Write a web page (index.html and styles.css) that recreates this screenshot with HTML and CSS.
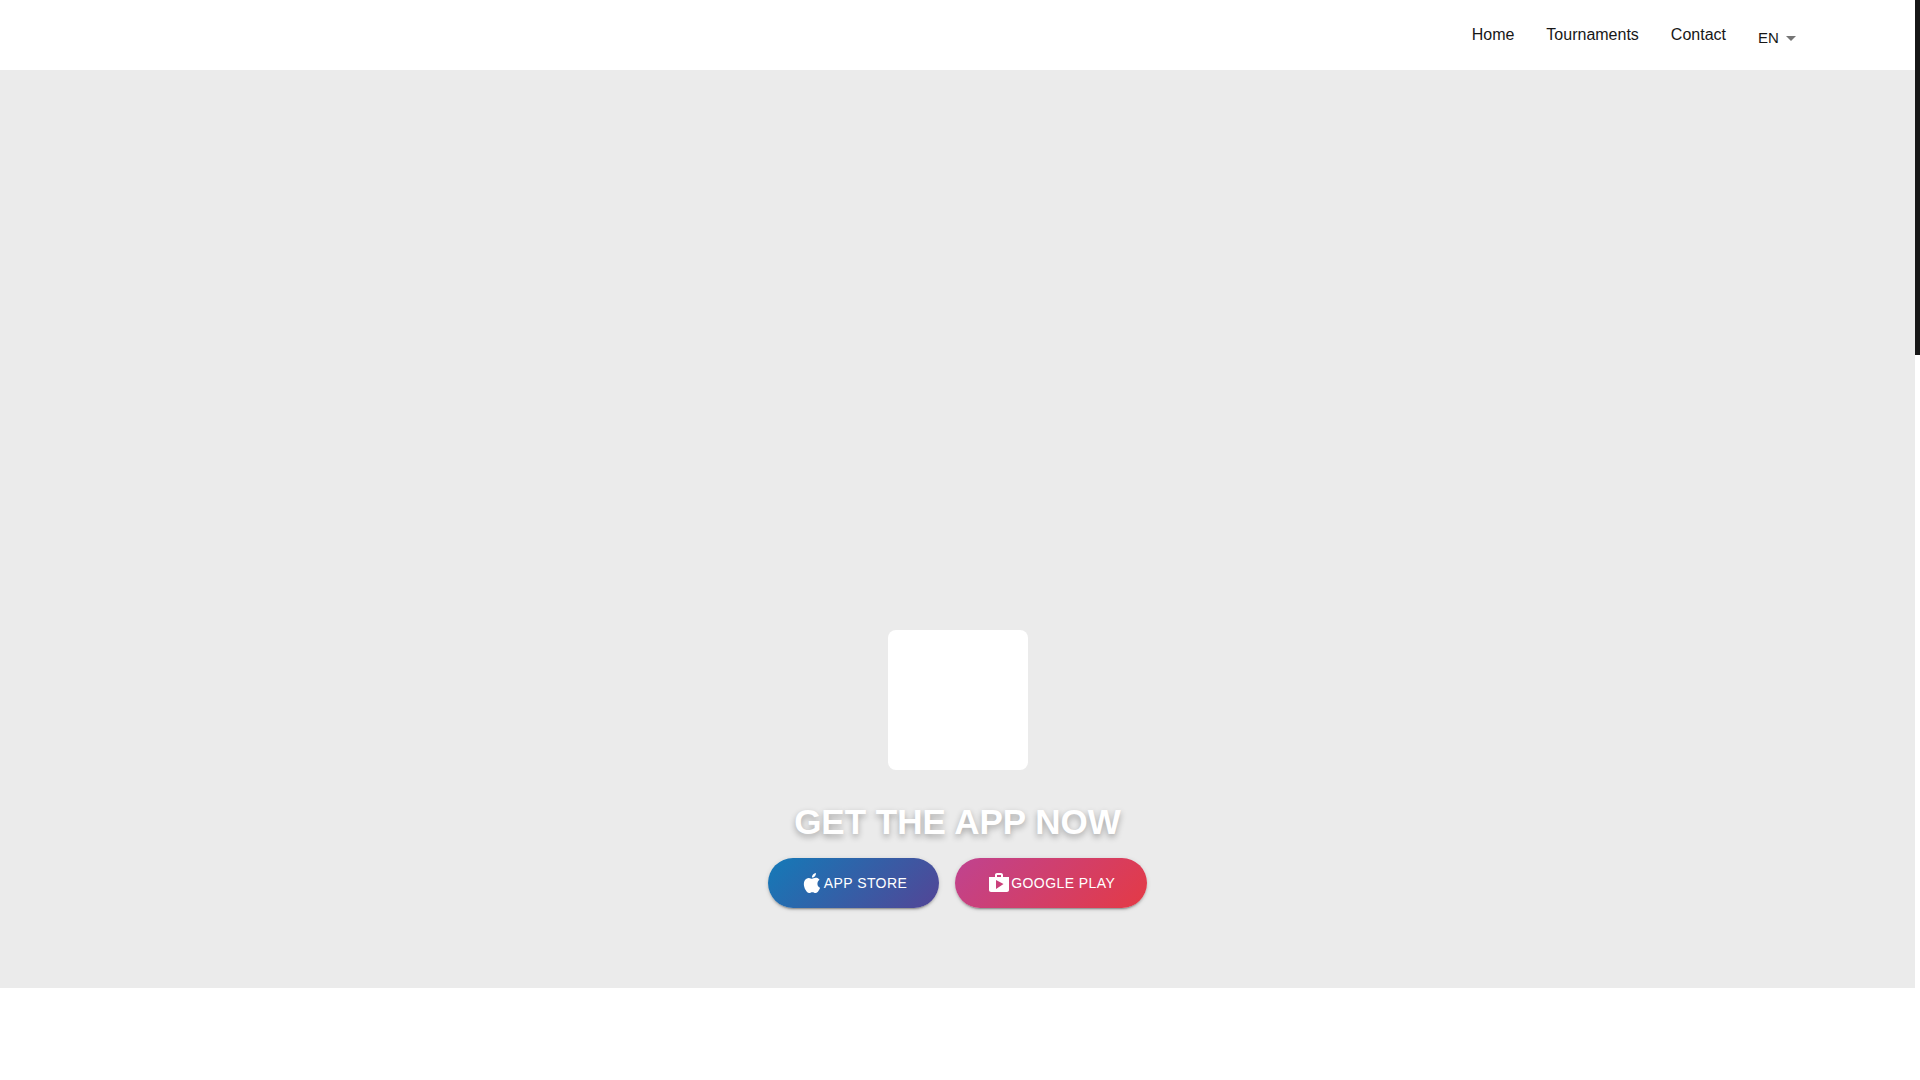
FILE: index.html
```html
<!DOCTYPE html>
<html lang="en">
<head>
  <meta charset="utf-8">
  <meta name="viewport" content="width=device-width, initial-scale=1">
  <title>Get the app now</title>
  <link rel="stylesheet" href="styles.css">
</head>
<body class="page">
  <div class="content">
    <header class="header">
      <nav class="nav">
        <a class="nav-link" href="#home">Home</a>
        <a class="nav-link" href="#tournaments">Tournaments</a>
        <a class="nav-link" href="#contact">Contact</a>
        <div class="language">
          <select class="language-select" aria-label="Language">
            <option>EN</option>
          </select>
          <svg class="language-arrow" viewBox="0 0 24 24" aria-hidden="true"><path d="M7 10l5 5 5-5z"/></svg>
        </div>
      </nav>
    </header>
    <main>
      <section class="hero">
        <div class="app-tile"></div>
        <h1 class="hero-title">GET THE APP NOW</h1>
        <div class="stores">
          <button class="store store-apple" type="button">
            <svg class="store-icon" viewBox="0 0 24 24" aria-hidden="true"><path d="M18.71 19.5c-.83 1.24-1.71 2.45-3.05 2.47-1.34.03-1.77-.79-3.29-.79-1.53 0-2 .77-3.27.82-1.31.05-2.3-1.32-3.14-2.53C4.25 17 2.94 12.45 4.7 9.39c.87-1.52 2.43-2.48 4.12-2.51 1.28-.02 2.5.87 3.29.87.78 0 2.26-1.07 3.81-.91.65.03 2.47.26 3.64 1.98-.09.06-2.17 1.28-2.15 3.81.03 3.02 2.65 4.03 2.68 4.04-.03.07-.42 1.44-1.38 2.83M13 3.5c.73-.83 1.94-1.46 2.94-1.5.13 1.17-.34 2.35-1.04 3.19-.69.85-1.83 1.51-2.95 1.42-.15-1.15.41-2.35 1.05-3.11z"/></svg>
            APP STORE
          </button>
          <button class="store store-google" type="button">
            <svg class="store-icon" viewBox="0 0 24 24" aria-hidden="true"><path d="M16 6V4c0-1.11-.89-2-2-2h-4c-1.11 0-2 .89-2 2v2H2v13c0 1.11.89 2 2 2h16c1.11 0 2-.89 2-2V6h-6zm-6-2h4v2h-4V4zM9 18V9l7.500 4L9 18z"/></svg>
            GOOGLE PLAY
          </button>
        </div>
      </section>
    </main>
  </div>
  <div class="scroll-rail" aria-hidden="true"><div class="scroll-thumb"></div></div>
</body>
</html>
```

FILE: styles.css
```css
* {
  box-sizing: border-box;
}

.page {
  display: flex;
  min-height: 100vh;
  margin: 0;
  background: #fff;
  color: #171717;
  font-family: "Liberation Sans", Arial, sans-serif;
}

.content {
  flex: 1;
  min-width: 0;
}

.header {
  display: flex;
  align-items: center;
  justify-content: flex-end;
  height: 70px;
  padding: 0 112px;
}

.nav {
  display: flex;
  align-items: center;
  gap: 32px;
}

.nav-link {
  color: inherit;
  font-size: 16px;
  line-height: 24px;
  text-decoration: none;
}

.language {
  position: relative;
  padding-top: 6px;
}

.language-select {
  display: block;
  width: 45px;
  height: 24px;
  padding: 0 24px 0 0;
  border: 0;
  background: none;
  color: inherit;
  font-family: inherit;
  font-size: 15px;
  line-height: 24px;
  appearance: none;
}

.language-arrow {
  position: absolute;
  right: 0;
  bottom: 0;
  width: 24px;
  height: 24px;
  fill: #757575;
  pointer-events: none;
}

.hero {
  display: flex;
  flex-direction: column;
  align-items: center;
  justify-content: flex-end;
  min-height: 85vh;
  padding: 80px 16px;
  background: #ebebeb;
}

.app-tile {
  width: 140px;
  height: 140px;
  border-radius: 8px;
  background: #fff;
}

.hero-title {
  margin: 32px 0 16px;
  color: #fff;
  font-size: 35px;
  line-height: 40px;
  text-align: center;
  text-shadow: 0 3px 6px rgba(0, 0, 0, 0.3);
}

.stores {
  display: flex;
  flex-wrap: wrap;
  justify-content: center;
  gap: 16px;
}

.store {
  display: flex;
  align-items: center;
  height: 50px;
  padding: 0 32px;
  border: 0;
  border-radius: 25px;
  color: #fff;
  font-family: inherit;
  font-size: 14px;
  letter-spacing: 0.03em;
  box-shadow: 0 3px 1px -2px rgba(0, 0, 0, 0.2), 0 2px 2px 0 rgba(0, 0, 0, 0.14), 0 1px 5px 0 rgba(0, 0, 0, 0.12);
  cursor: pointer;
}

.store-apple {
  background: linear-gradient(135deg, #147ab8, #534596);
}

.store-google {
  background: linear-gradient(135deg, #bf4390, #e43a45);
}

.store-icon {
  width: 24px;
  height: 24px;
  fill: currentColor;
}

.scroll-rail {
  width: 5px;
}

.scroll-thumb {
  height: 355px;
  background: #171717;
}
```
